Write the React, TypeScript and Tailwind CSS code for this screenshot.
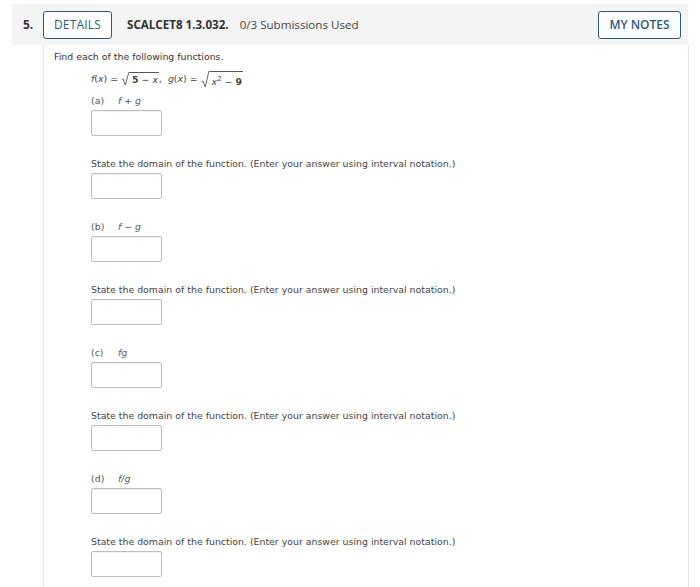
import React from "react";

const content = "font-['DejaVu_Sans',Verdana,sans-serif]";

function Radical({ children, h = 15 }: { children: React.ReactNode; h?: number }) {
  return (
    <span className="inline-flex items-stretch align-middle">
      <svg width="9" height={h} viewBox={`0 0 9 ${h}`} className="block shrink-0">
        <path
          d={`M0.5 ${h - 6} L2 ${h - 7} L4.3 ${h - 1} L7.8 0.5 L9 0.5`}
          stroke="#555"
          strokeWidth="0.9"
          fill="none"
        />
      </svg>
      <span className="border-t border-[#555] pl-[2px] pr-[1px] block whitespace-pre" style={{ height: h, paddingTop: h - 13, lineHeight: "12px" }}>
        {children}
      </span>
    </span>
  );
}

function Box() {
  return (
    <div className="mt-[2px] h-[26px] w-[71px] border border-[#bdbdbd] rounded-[2px] bg-white shadow-[inset_0_1px_1px_rgba(0,0,0,0.06)]" />
  );
}

function Part({ letter, expr }: { letter: string; expr: React.ReactNode }) {
  return (
    <>
      <div className="h-[14px] flex items-center text-[#555]">
        <span className="w-[27px]">({letter})</span>
        <span className="italic">{expr}</span>
      </div>
      <Box />
      <div className="h-[21px]" />
      <div className="h-[14px] flex items-center text-[#444]">
        State the domain of the function. (Enter your answer using interval notation.)
      </div>
      <Box />
      <div className="h-[21px]" />
    </>
  );
}

export default function App() {
  return (
    <div className="w-[700px] h-[587px] bg-white overflow-hidden">
      <div className="pt-[4px] pl-[12px] pr-[12px]">
        <div className="h-[41px] bg-[#f4f4f4] flex items-center font-['Open_Sans',sans-serif] text-[11.6px] text-[#333]">
          <span className="w-[31px] pl-[11px] font-bold text-[12px]">5.</span>
          <div className="h-[28px] w-[69px] border border-[#2f5a72] rounded-[3px] bg-white flex items-center justify-center text-[#2b5b7c] text-[12px] tracking-[0.2px]">
            DETAILS
          </div>
          <span className="ml-[15px] font-bold text-[#333]">SCALCET8 1.3.032.</span>
          <span className="ml-[11px] text-[#444]">0/3 Submissions Used</span>
          <div className="ml-auto mr-[7px] h-[28px] w-[83px] border border-[#2f5a72] rounded-[3px] bg-white flex items-center justify-center text-[#2b5b7c] text-[12px] font-semibold">
            MY NOTES
          </div>
        </div>
      </div>
      <div
        className={`ml-[43px] mr-[11px] h-[560px] border-l border-r border-[#e6e6e6] ${content} text-[9.4px] text-[#333]`}
      >
        <div className="pl-[10px] pt-[5px]">
          <div className="h-[14px] flex items-center">Find each of the following functions.</div>
          <div className="pl-[37px]">
            <div className="h-[18px] mt-[6px] flex items-center text-[#444] whitespace-pre">
              <span className="italic">f</span>
              <span>(</span>
              <span className="italic">x</span>
              <span>) = </span>
              <Radical h={14}>
                <span className="font-semibold">5</span>
                <span> − </span>
                <span className="italic">x</span>
              </Radical>
              <span>,  </span>
              <span className="italic">g</span>
              <span>(</span>
              <span className="italic">x</span>
              <span>) = </span>
              <Radical h={17}>
                <span className="italic">x</span>
                <span className="text-[7px] relative top-[-4px]">2</span>
                <span> − </span>
                <span className="font-semibold">9</span>
              </Radical>
            </div>
            <div className="h-[6px]" />
            <Part letter="a" expr={<>f + g</>} />
            <Part letter="b" expr={<>f − g</>} />
            <Part letter="c" expr={<>fg</>} />
            <Part letter="d" expr={<>f/g</>} />
          </div>
        </div>
      </div>
    </div>
  );
}
